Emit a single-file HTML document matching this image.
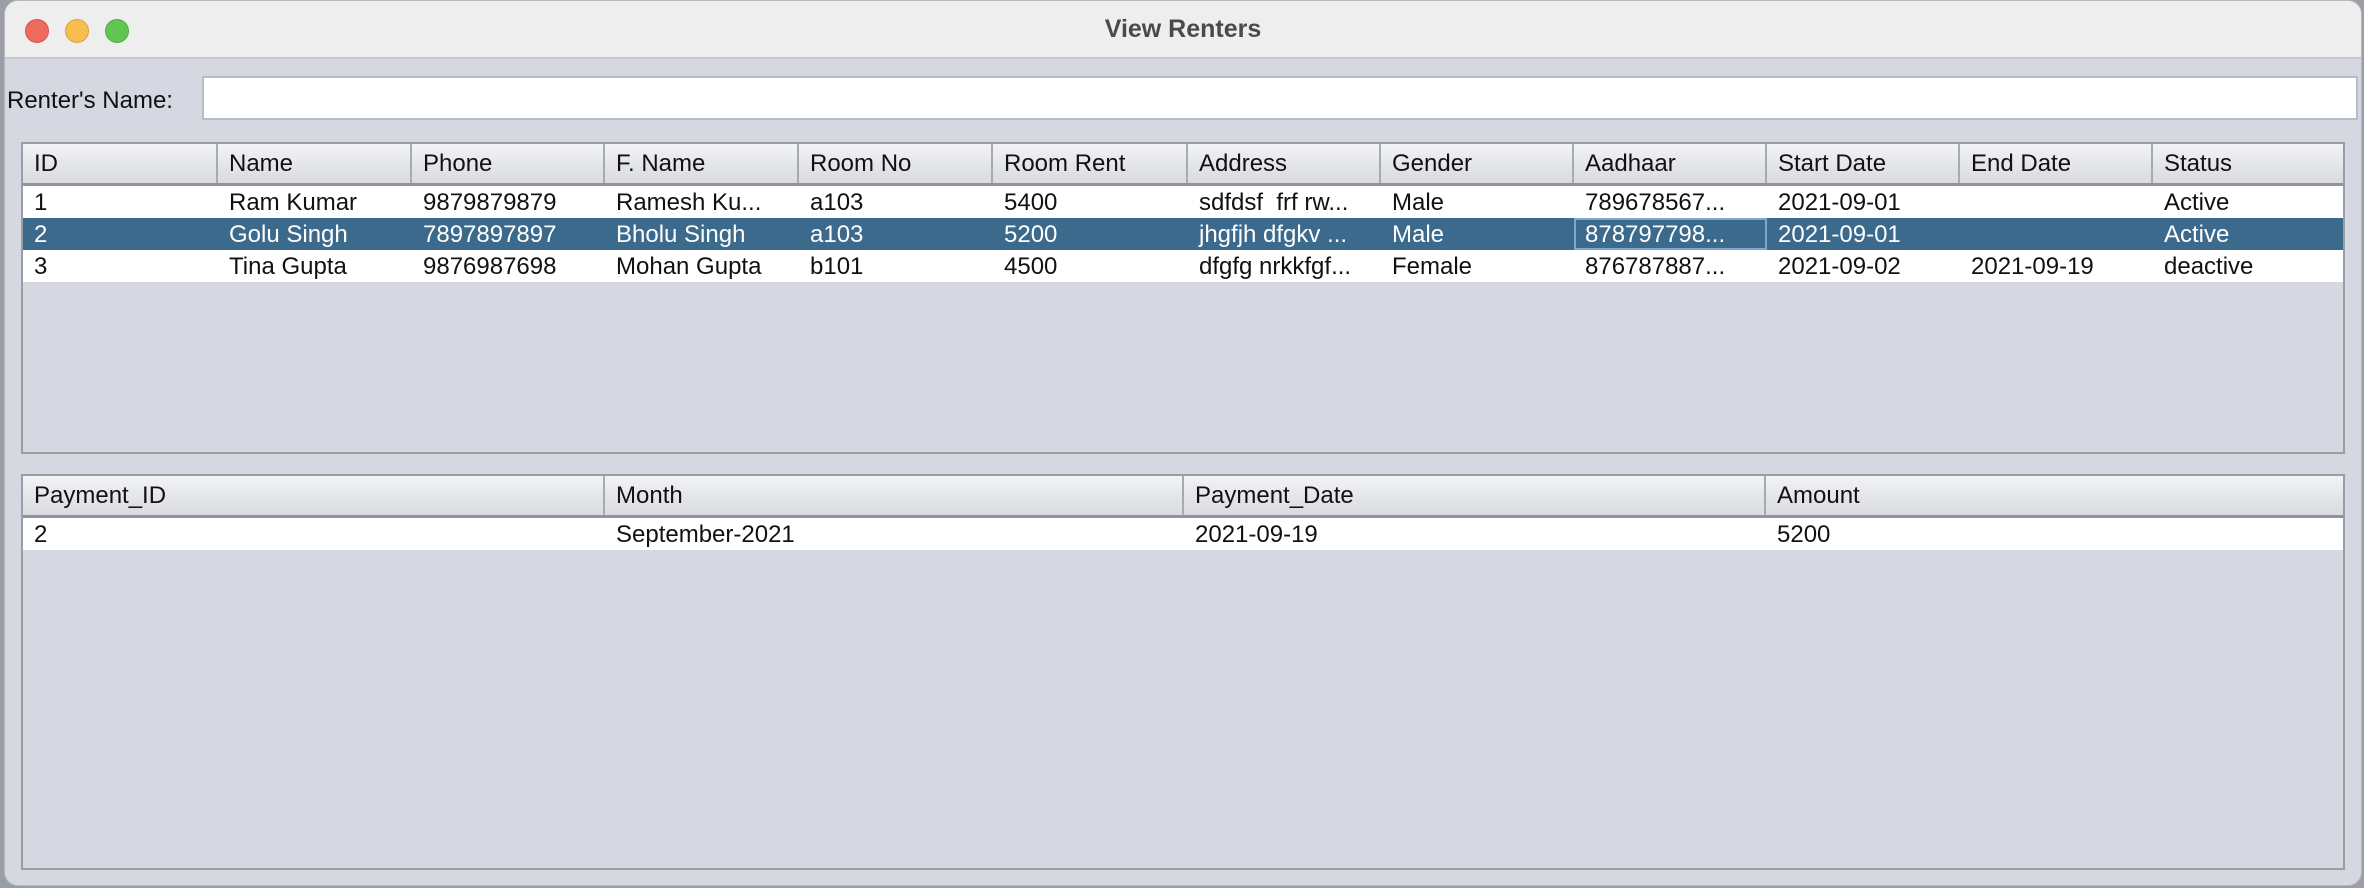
<!DOCTYPE html>
<html><head><meta charset="utf-8"><style>
*{margin:0;padding:0;box-sizing:border-box}
body{width:2364px;height:888px;background:#9a9ea6;font-family:"Liberation Sans",sans-serif;position:relative;overflow:hidden}
.win{position:absolute;left:4px;top:0;width:2358px;height:886px;background:#d5d8e0;border-radius:14px;overflow:hidden;border:1px solid #b8b8bc}
.title{position:absolute;left:0;top:0;width:100%;height:58px;background:#efeeef;border-bottom:2px solid #c6c6ca;text-align:center;font-weight:bold;font-size:25px;color:#4a4a4a;line-height:56px}
.dot{position:absolute;top:18px;width:24px;height:24px;border-radius:50%}
.lbl{position:absolute;left:2px;top:86px;font-size:24px;color:#111}
.tf{position:absolute;left:197px;top:75px;width:2156px;height:44px;background:#fff;border:2px solid #b9bcc2}
.tbl{position:absolute;border:2px solid #9a9da4;background:#d5d8e0}
.hdr{position:absolute;left:0;top:0;height:42px;background:linear-gradient(#f2f3f5,#e2e4e8 60%,#d9dbe0);border-bottom:3px solid #8f939b}
.hc{position:absolute;top:0;height:39px;border-right:2px solid #a7aab1;font-size:24px;line-height:40px;padding-left:11px;color:#111;white-space:nowrap}
.row{position:absolute;left:0;height:32px;background:#fff}
.c{position:absolute;top:0;height:32px;font-size:24px;line-height:33px;padding-left:11px;color:#111;white-space:nowrap}
.sel{background:#3b6a8c}
.sel .c{color:#fff}
</style></head><body>
<div class="win">
<div class="title">View Renters</div>
<div class="dot" style="left:20px;background:#ee6a5f;border:1px solid #d95448"></div>
<div class="dot" style="left:60px;background:#f5be4f;border:1px solid #dba33b"></div>
<div class="dot" style="left:100px;background:#61c554;border:1px solid #4fae42"></div>
<div class="lbl">Renter's Name:</div>
<div class="tf"></div>

<div class="tbl" style="left:16px;top:141px;width:2324px;height:312px">
<div class="hdr" style="width:2320px">
<div class="hc" style="left:0;width:195px">ID</div>
<div class="hc" style="left:195px;width:194px">Name</div>
<div class="hc" style="left:389px;width:193px">Phone</div>
<div class="hc" style="left:582px;width:194px">F. Name</div>
<div class="hc" style="left:776px;width:194px">Room No</div>
<div class="hc" style="left:970px;width:195px">Room Rent</div>
<div class="hc" style="left:1165px;width:193px">Address</div>
<div class="hc" style="left:1358px;width:193px">Gender</div>
<div class="hc" style="left:1551px;width:193px">Aadhaar</div>
<div class="hc" style="left:1744px;width:193px">Start Date</div>
<div class="hc" style="left:1937px;width:193px">End Date</div>
<div class="hc" style="left:2130px;width:190px;border-right:none">Status</div>
</div>
<div class="row" style="top:42px;width:2320px">
<div class="c" style="left:0">1</div><div class="c" style="left:195px">Ram Kumar</div><div class="c" style="left:389px">9879879879</div><div class="c" style="left:582px">Ramesh Ku...</div><div class="c" style="left:776px">a103</div><div class="c" style="left:970px">5400</div><div class="c" style="left:1165px">sdfdsf&nbsp; frf rw...</div><div class="c" style="left:1358px">Male</div><div class="c" style="left:1551px">789678567...</div><div class="c" style="left:1744px">2021-09-01</div><div class="c" style="left:2130px">Active</div>
</div>
<div class="row sel" style="top:74px;width:2320px">
<div class="c" style="left:0">2</div><div class="c" style="left:195px">Golu Singh</div><div class="c" style="left:389px">7897897897</div><div class="c" style="left:582px">Bholu Singh</div><div class="c" style="left:776px">a103</div><div class="c" style="left:970px">5200</div><div class="c" style="left:1165px">jhgfjh dfgkv ...</div><div class="c" style="left:1358px">Male</div><div class="c" style="left:1551px;width:193px;border:2px solid #7fa6cf;padding-left:9px;line-height:29px">878797798...</div><div class="c" style="left:1744px">2021-09-01</div><div class="c" style="left:2130px">Active</div>
</div>
<div class="row" style="top:106px;width:2320px">
<div class="c" style="left:0">3</div><div class="c" style="left:195px">Tina Gupta</div><div class="c" style="left:389px">9876987698</div><div class="c" style="left:582px">Mohan Gupta</div><div class="c" style="left:776px">b101</div><div class="c" style="left:970px">4500</div><div class="c" style="left:1165px">dfgfg nrkkfgf...</div><div class="c" style="left:1358px">Female</div><div class="c" style="left:1551px">876787887...</div><div class="c" style="left:1744px">2021-09-02</div><div class="c" style="left:1937px">2021-09-19</div><div class="c" style="left:2130px">deactive</div>
</div>
</div>

<div class="tbl" style="left:16px;top:473px;width:2324px;height:396px">
<div class="hdr" style="width:2320px">
<div class="hc" style="left:0;width:582px">Payment_ID</div>
<div class="hc" style="left:582px;width:579px">Month</div>
<div class="hc" style="left:1161px;width:582px">Payment_Date</div>
<div class="hc" style="left:1743px;width:577px;border-right:none">Amount</div>
</div>
<div class="row" style="top:42px;width:2320px">
<div class="c" style="left:0">2</div><div class="c" style="left:582px">September-2021</div><div class="c" style="left:1161px">2021-09-19</div><div class="c" style="left:1743px">5200</div>
</div>
</div>
</div>
</body></html>
